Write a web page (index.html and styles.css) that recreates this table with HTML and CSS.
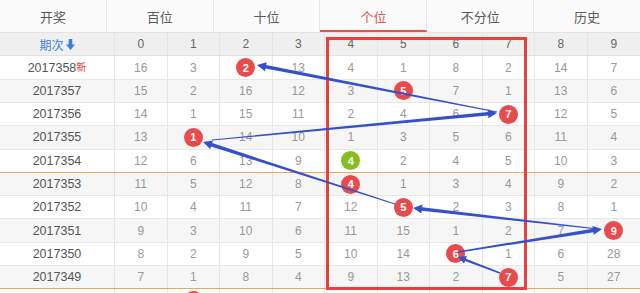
FILE: index.html
```html
<!DOCTYPE html>
<html lang="zh-CN">
<head>
<meta charset="utf-8">
<title>走势图</title>
<link rel="stylesheet" href="styles.css">
</head>
<body>
<div class="chart">
  <div class="tabs">
    <div class="tab">开奖</div>
    <div class="tab">百位</div>
    <div class="tab">十位</div>
    <div class="tab active">个位</div>
    <div class="tab">不分位</div>
    <div class="tab">历史</div>
  </div>
  <div class="grid">
    <div class="row head">
      <div class="cell issue-head">期次<svg class="down" viewBox="0 0 10 12" width="9" height="11"><path d="M3 0h4v6h3l-5 6-5-6h3z" fill="#3b7fd8"/></svg></div>
      <div class="cell">0</div><div class="cell">1</div><div class="cell">2</div><div class="cell">3</div><div class="cell">4</div><div class="cell">5</div><div class="cell">6</div><div class="cell">7</div><div class="cell">8</div><div class="cell">9</div>
    </div>
    <div class="row">
      <div class="cell issue">2017358<span class="new">新</span></div>
      <div class="cell">16</div><div class="cell">3</div><div class="cell"><span class="ball">2</span></div><div class="cell">13</div><div class="cell">4</div><div class="cell">1</div><div class="cell">8</div><div class="cell">2</div><div class="cell">14</div><div class="cell">7</div>
    </div>
    <div class="row alt">
      <div class="cell issue">2017357</div>
      <div class="cell">15</div><div class="cell">2</div><div class="cell">16</div><div class="cell">12</div><div class="cell">3</div><div class="cell"><span class="ball">5</span></div><div class="cell">7</div><div class="cell">1</div><div class="cell">13</div><div class="cell">6</div>
    </div>
    <div class="row">
      <div class="cell issue">2017356</div>
      <div class="cell">14</div><div class="cell">1</div><div class="cell">15</div><div class="cell">11</div><div class="cell">2</div><div class="cell">4</div><div class="cell">6</div><div class="cell"><span class="ball">7</span></div><div class="cell">12</div><div class="cell">5</div>
    </div>
    <div class="row alt">
      <div class="cell issue">2017355</div>
      <div class="cell">13</div><div class="cell"><span class="ball">1</span></div><div class="cell">14</div><div class="cell">10</div><div class="cell">1</div><div class="cell">3</div><div class="cell">5</div><div class="cell">6</div><div class="cell">11</div><div class="cell">4</div>
    </div>
    <div class="row group-end">
      <div class="cell issue">2017354</div>
      <div class="cell">12</div><div class="cell">6</div><div class="cell">13</div><div class="cell">9</div><div class="cell"><span class="ball green">4</span></div><div class="cell">2</div><div class="cell">4</div><div class="cell">5</div><div class="cell">10</div><div class="cell">3</div>
    </div>
    <div class="row alt">
      <div class="cell issue">2017353</div>
      <div class="cell">11</div><div class="cell">5</div><div class="cell">12</div><div class="cell">8</div><div class="cell"><span class="ball">4</span></div><div class="cell">1</div><div class="cell">3</div><div class="cell">4</div><div class="cell">9</div><div class="cell">2</div>
    </div>
    <div class="row">
      <div class="cell issue">2017352</div>
      <div class="cell">10</div><div class="cell">4</div><div class="cell">11</div><div class="cell">7</div><div class="cell">12</div><div class="cell"><span class="ball">5</span></div><div class="cell">2</div><div class="cell">3</div><div class="cell">8</div><div class="cell">1</div>
    </div>
    <div class="row alt">
      <div class="cell issue">2017351</div>
      <div class="cell">9</div><div class="cell">3</div><div class="cell">10</div><div class="cell">6</div><div class="cell">11</div><div class="cell">15</div><div class="cell">1</div><div class="cell">2</div><div class="cell">7</div><div class="cell"><span class="ball">9</span></div>
    </div>
    <div class="row">
      <div class="cell issue">2017350</div>
      <div class="cell">8</div><div class="cell">2</div><div class="cell">9</div><div class="cell">5</div><div class="cell">10</div><div class="cell">14</div><div class="cell"><span class="ball">6</span></div><div class="cell">1</div><div class="cell">6</div><div class="cell">28</div>
    </div>
    <div class="row alt group-end">
      <div class="cell issue">2017349</div>
      <div class="cell">7</div><div class="cell">1</div><div class="cell">8</div><div class="cell">4</div><div class="cell">9</div><div class="cell">13</div><div class="cell">2</div><div class="cell"><span class="ball">7</span></div><div class="cell">5</div><div class="cell">27</div>
    </div>
    <div class="row">
      <div class="cell"></div>
      <div class="cell"></div><div class="cell"><span class="ball"></span></div><div class="cell"></div><div class="cell"></div><div class="cell"></div><div class="cell"></div><div class="cell"></div><div class="cell"></div><div class="cell"></div><div class="cell"></div>
    </div>
  </div>
  <div class="mark"></div>
  <svg class="trend" width="640" height="293" viewBox="0 0 640 293">
    <g fill="#3450cc">
      <polygon points="500.27,272.30 465.93,258.68 466.90,256.11 458,257 464.06,263.59 465.04,261.02 499.73,273.70"/>
      <polygon points="458.12,252.74 593.39,232.15 593.82,234.86 602,229 592.40,225.98 592.83,228.69 457.88,251.26"/>
      <polygon points="598.06,228.50 422.14,207.28 422.45,204.55 413,208 421.43,213.49 421.74,210.76 597.94,229.50"/>
      <polygon points="395.15,203.52 212.10,143.10 212.94,140.49 203,142 210.18,149.05 211.03,146.43 394.85,204.48"/>
      <polygon points="212.05,140.50 488.21,115.59 488.46,118.33 497,113 487.62,109.37 487.87,112.11 211.95,139.50"/>
      <polygon points="497.10,111.51 266.17,65.01 266.70,62.31 257,65 264.97,71.15 265.49,68.45 496.90,112.49"/>
    </g>
  </svg>
</div>
</body>
</html>
```

FILE: styles.css
```css
html, body {
  margin: 0;
  padding: 0;
  height: 293px;
  overflow: hidden;
  background: #fff;
}

.chart {
  position: relative;
  width: 640px;
  font-family: "Liberation Sans", "Noto Sans CJK SC", sans-serif;
  font-size: 12px;
  color: #999;
}

.tabs {
  display: flex;
  height: 33px;
  border-bottom: 1px solid #e3e3e3;
  box-sizing: border-box;
  background: #fbfbfb;
}

.tab {
  flex: 1;
  display: flex;
  align-items: center;
  justify-content: center;
  font-size: 13px;
  color: #5a5a5a;
  border-right: 1px solid #e8e8e8;
  box-sizing: border-box;
}

.tab:last-child {
  border-right: none;
}

.tab.active {
  color: #e25252;
  border-bottom: 2px solid #e25252;
  padding-top: 2px;
}

.grid {
  display: flex;
  flex-direction: column;
}

.row {
  display: grid;
  grid-template-columns: 115px repeat(10, 1fr);
  height: 23.3px;
  box-sizing: border-box;
  border-bottom: 1px solid #e8e8e8;
  background: #fff;
}

.row.alt {
  background: #f6f6f6;
}

.row.head {
  height: 23.4px;
  background: #f0f0f0;
  border-bottom: 1px solid #e2e2e2;
  color: #666;
}

.row.group-end {
  border-bottom: 1px solid #f4a35c;
}

.cell {
  display: flex;
  align-items: center;
  justify-content: center;
  border-right: 1px solid #e6e6e6;
  box-sizing: border-box;
}

.cell:last-child {
  border-right: none;
}

.issue {
  color: #555;
  font-size: 12.5px;
}

.issue-head {
  color: #3b7fd8;
  font-size: 12px;
  gap: 2px;
}

.down {
  display: block;
}

.new {
  color: #e03c3c;
  font-size: 10px;
  align-self: flex-start;
  margin-top: 3px;
}

.ball {
  width: 19px;
  height: 19px;
  border-radius: 50%;
  background: #e84b4b;
  color: #fff;
  font-weight: bold;
  font-size: 11px;
  display: flex;
  align-items: center;
  justify-content: center;
}

.ball.green {
  background: #85bd22;
}

.mark {
  position: absolute;
  left: 326px;
  top: 37px;
  width: 201px;
  height: 253px;
  box-sizing: border-box;
  border: 3px solid #e8403a;
  pointer-events: none;
}

.trend {
  position: absolute;
  left: 0;
  top: 0;
  pointer-events: none;
}
```
